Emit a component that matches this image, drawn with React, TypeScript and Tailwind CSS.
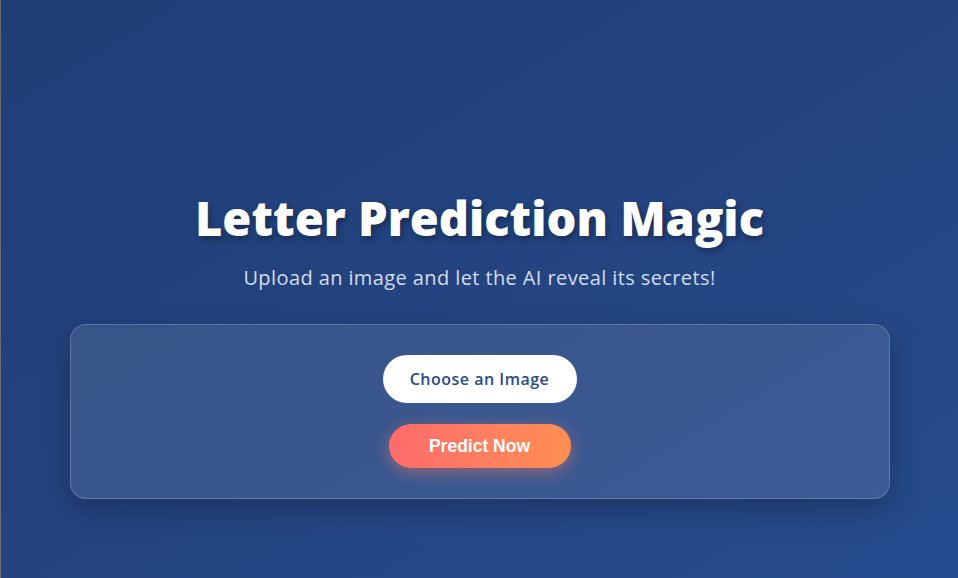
import React, { useState } from 'react';

const App: React.FC = () => {
  const [fileName, setFileName] = useState<string | null>(null);

  return (
    <div
      className="min-h-screen w-full border-l border-[#6b6b6b] bg-gradient-to-br from-[#203d75] to-[#264b8c] flex flex-col items-center pt-[190px] text-white"
      style={{ fontFamily: '"Open Sans", "Noto Sans", sans-serif' }}
    >
      <h1 className="text-[47px] leading-[56px] font-extrabold [text-shadow:2px_3px_6px_rgba(0,0,0,0.35)]">
        Letter Prediction Magic
      </h1>
      <p className="mt-[18px] text-[20px] leading-[28px] tracking-[0.4px] text-[#d3dcec]">
        Upload an image and let the AI reveal its secrets!
      </p>

      <div className="mt-[32px] w-[820px] h-[175px] rounded-2xl border border-white/20 bg-white/10 shadow-[0_10px_30px_rgba(0,0,0,0.25)] flex flex-col items-center pt-[30px] gap-[21px]">
        <label className="h-[48px] w-[194px] rounded-full bg-white text-[#2a4a8a] text-[16px] tracking-[0.5px] font-semibold flex items-center justify-center cursor-pointer">
          {fileName ?? 'Choose an Image'}
          <input
            type="file"
            accept="image/*"
            className="hidden"
            onChange={(e) => e.target.files && setFileName(e.target.files[0]?.name ?? null)}
          />
        </label>
        <button
          className="h-[44px] w-[182px] rounded-full bg-gradient-to-r from-[#ff6b6b] to-[#ff8e53] text-[17.5px] font-bold text-white shadow-[0_4px_16px_rgba(255,120,90,0.45)]"
          style={{ fontFamily: '"Liberation Sans", Arial, sans-serif' }}
        >
          Predict Now
        </button>
      </div>
    </div>
  );
};

export default App;
